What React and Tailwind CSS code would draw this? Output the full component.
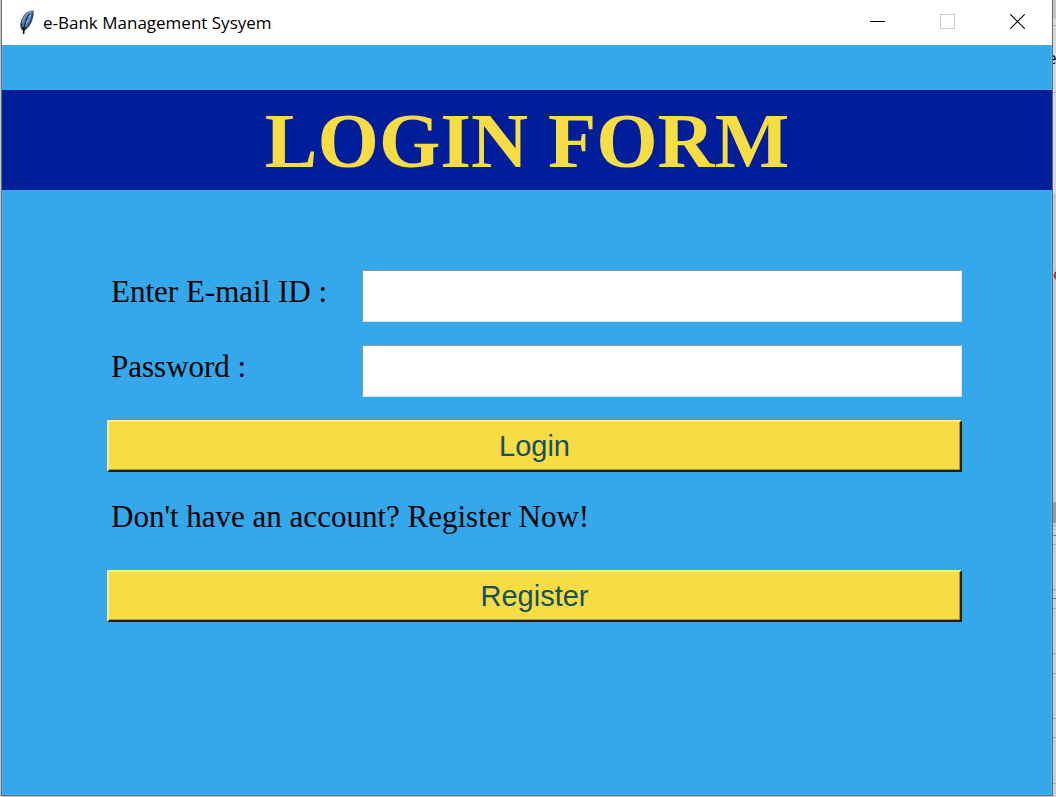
import React from "react";

function FeatherIcon() {
  return (
    <svg width="16" height="26" viewBox="0 0 16 26" aria-hidden="true">
      <path d="M14 1.2 C9 1.2 5 5 3 9.5 C1.6 13 1.4 16.5 2.8 19 L4.6 20.5 C8 18.5 10.5 15.5 12 12 C13.6 8 14.6 4.5 14 1.2 Z" fill="#4a86c8" stroke="#55585c" strokeWidth="1.2" />
      <path d="M12.4 1.6 C8.5 2.8 4.6 7 3.4 12" fill="none" stroke="#8f9498" strokeWidth="1.6" />
      <path d="M13.6 3.5 C13.2 8 11.5 12.5 8.4 16.5" fill="none" stroke="#3c4248" strokeWidth="1.6" />
      <path d="M10.5 4 C8 7.5 6.2 12 5 18 M2.6 13.5 L3.2 18 L5 20 L7.6 17" fill="none" stroke="#1d232b" strokeWidth="1.2" />
      <path d="M9.5 8 L11.5 5 M7.5 13 L10 9.5" stroke="#6aaaf0" strokeWidth="1.8" />
      <path d="M4.8 17 L4.6 24" stroke="#111" strokeWidth="1.6" />
    </svg>
  );
}

function TitleBar() {
  return (
    <header className="flex h-[45px] items-center bg-white">
      <div className="flex flex-1 items-center gap-2 pl-[17px]">
        <FeatherIcon />
        <h2 className="font-['Open_Sans',sans-serif] text-[17px] leading-6 text-black">
          e-Bank Management Sysyem
        </h2>
      </div>
      <div className="flex h-full">
        <button type="button" aria-label="Minimize" className="flex w-[70px] items-center justify-center pb-0.5">
          <svg width="15" height="15" viewBox="0 0 15 15" shapeRendering="crispEdges"><path d="M0 7.5H15" stroke="#000" /></svg>
        </button>
        <button type="button" aria-label="Maximize" disabled className="flex w-[70px] items-center justify-center pb-0.5">
          <svg width="15" height="15" viewBox="0 0 15 15" shapeRendering="crispEdges"><path d="M.5 .5H14.5V14.5H.5Z" fill="none" stroke="#ccc" /></svg>
        </button>
        <button type="button" aria-label="Close" className="flex w-[70px] items-center justify-center pb-0.5">
          <svg width="15" height="15" viewBox="0 0 15 15"><path d="M.3 .3L14.7 14.7M14.7 .3L.3 14.7" stroke="#000" strokeWidth="1.1" /></svg>
        </button>
      </div>
    </header>
  );
}

function Field({ id, label, type }) {
  return (
    <div className="flex items-start">
      <label htmlFor={id} className="w-[255px] shrink-0 pl-1 pt-1 text-[31px] leading-9">{label}</label>
      <input
        id={id}
        type={type}
        className="h-[52px] min-w-0 flex-1 border border-t-[#8f9aa5] border-l-[#8f9aa5] border-r-[#dfe3e6] border-b-[#dfe3e6] bg-white px-2 text-[28px] outline-none"
      />
    </div>
  );
}

function RaisedButton({ type, children }) {
  return (
    <button
      type={type}
      className="h-[52px] w-full border-2 border-t-[#f5ec9c] border-l-[#f5ec9c] border-r-[#1d1d10] border-b-[#1d1d10] bg-[#f7dc43] font-['Liberation_Sans',Arial,sans-serif] text-[29px] leading-8 text-[#17505c] shadow-[inset_-1px_-1px_0_#a8962e]"
    >
      {children}
    </button>
  );
}

function BackdropEdge() {
  return (
    <div className="flex w-[3px] flex-col overflow-hidden bg-[#cfcdcd]" aria-hidden="true">
      <div className="h-[19px] bg-[#c4c4c4]" />
      <div className="h-[7px] border-b border-[#aaa] bg-[#dcdcdc]" />
      <div className="h-[67px] border-b border-[#b5b5b5] bg-[#d8d8d8] pt-5 font-['Open_Sans',sans-serif] text-[17px] leading-6 text-black">
        <span className="-ml-1.5">e</span>
      </div>
      <div className="h-[101px] bg-[#d8d8d8]" />
      <div className="h-[308px] bg-[#cac8c8] pt-[68px] font-['Open_Sans',sans-serif] text-[17px] leading-6 text-[#a31515]">e</div>
      <div className="h-[21px] bg-[#999]" />
      <div className="h-[3px] border-b border-[#aaa]" />
      <div className="h-[10px] border-b border-[#777]" />
      <div className="h-[9px] border-b border-[#aaa]" />
      <div className="h-[45px] border-b border-[#aaa]" />
      <div className="h-[9px] border-b border-[#777]" />
      <div className="h-[10px] border-b border-[#aaa]" />
      <div className="h-[45px] border-b border-[#aaa]" />
      <div className="h-[20px] border-b border-[#aaa]" />
      <div className="h-[45px] border-b border-[#aaa]" />
      <div className="h-[19px] border-b border-[#aaa]" />
      <div className="h-[46px] border-b border-[#aaa]" />
    </div>
  );
}

export default function App() {
  return (
    <div className="flex min-h-screen bg-[#c6c6c6] pl-px">
      <div className="mb-px flex min-w-0 flex-1 flex-col border-x border-b border-[#5d6b75] bg-[#35a7eb]">
        <TitleBar />
        <main className="flex flex-1 flex-col border-x border-b border-[#4db4f2] pt-[45px] font-['Liberation_Serif','Times_New_Roman',serif] text-black">
          <h1 className="-mx-px bg-[#001e99] pt-0.5 text-center text-[79px] leading-[98px] font-bold text-[#f7dc43]">
            LOGIN FORM
          </h1>
          <form className="flex flex-col pt-20 pr-[89px] pb-20 pl-[104px]" onSubmit={(e) => e.preventDefault()}>
            <div className="flex flex-col gap-[23px]">
              <Field id="email" label="Enter E-mail ID :" type="email" />
              <Field id="password" label="Password :" type="password" />
              <RaisedButton type="submit">Login</RaisedButton>
            </div>
            <p className="pt-[27px] pb-[35px] pl-1 text-[31px] leading-9">Don't have an account? Register Now!</p>
            <RaisedButton type="button">Register</RaisedButton>
          </form>
        </main>
      </div>
      <BackdropEdge />
    </div>
  );
}
